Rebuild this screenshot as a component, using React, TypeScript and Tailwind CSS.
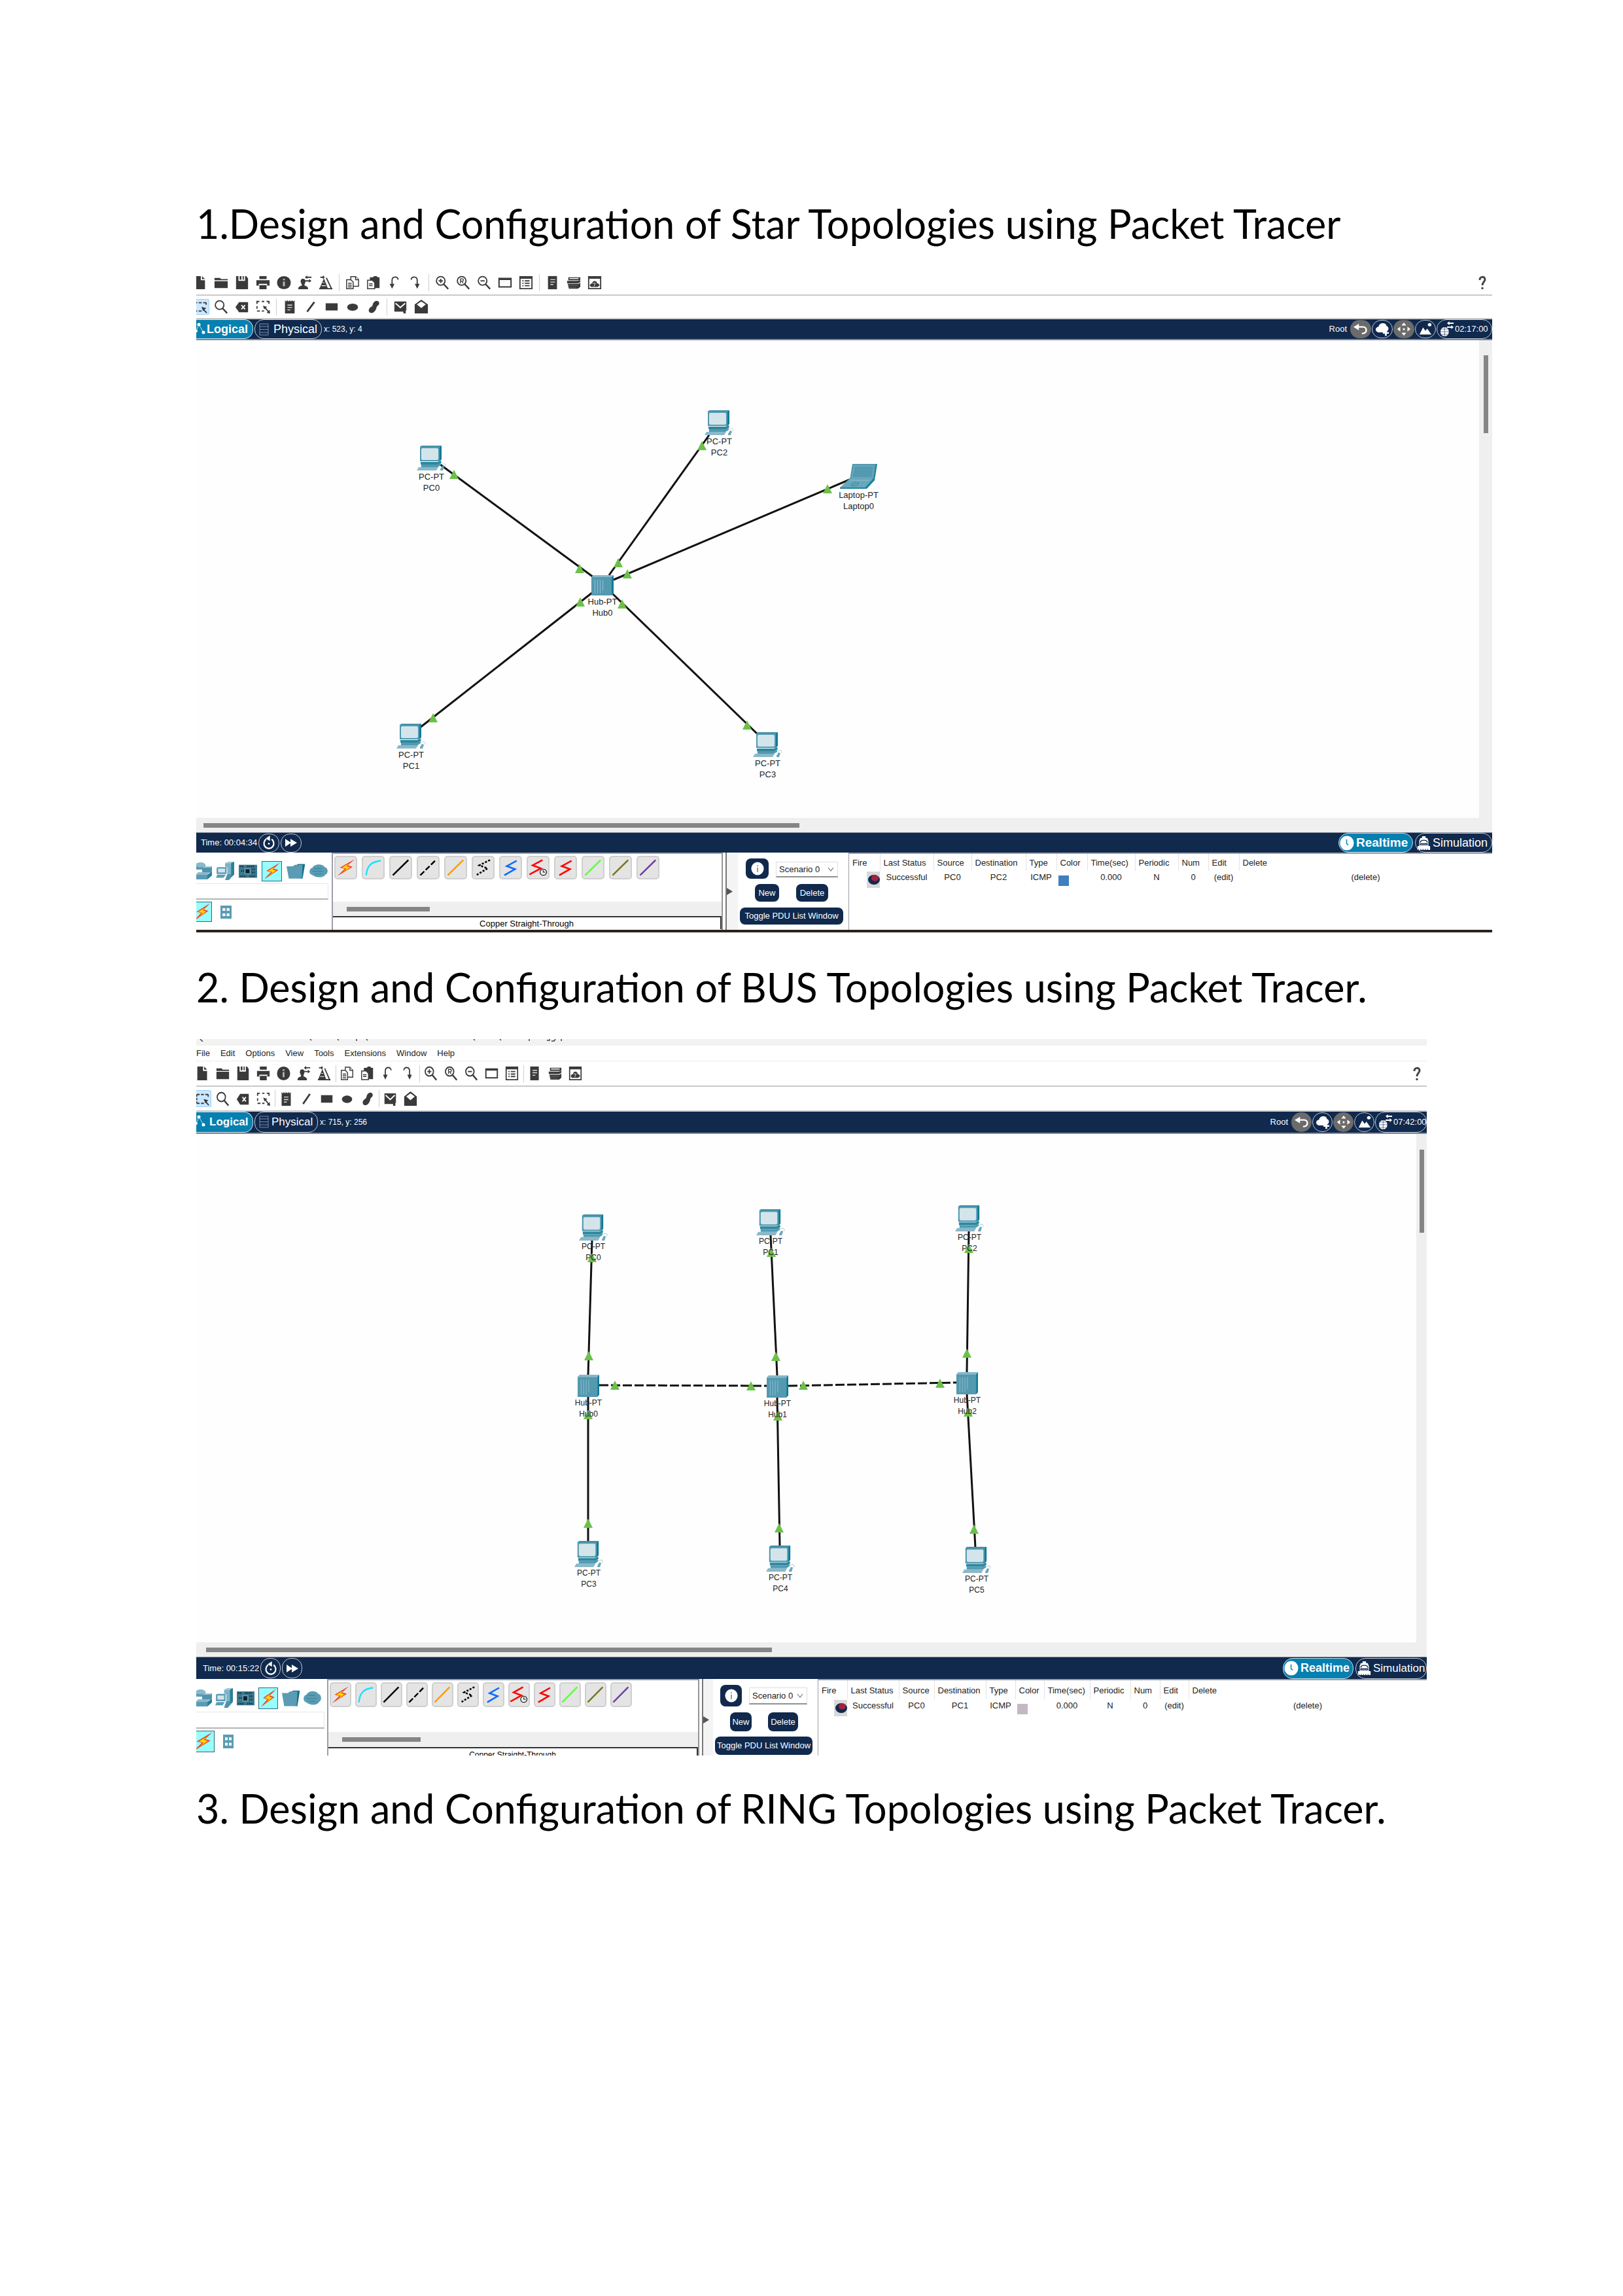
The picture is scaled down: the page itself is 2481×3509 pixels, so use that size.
import React from "react";

type Variant = {
  id: string;
  menu: boolean;
  iconBox: string;
  firstCell: string;
  cell: string;
  sep: string;
  row1: string;
  row2: string;
  selected: string;
  nav: string;
  pill: string;
  pillText: string;
  realtimeText: string;
  round: string;
  logical: string;
  physical: string;
  clock: string;
  canvas: string;
  gutter: string;
  vThumb: string;
  hThumb: string;
  timeBar: string;
  timePad: string;
  timeBtn: string;
  realtime: string;
  simulation: string;
  lower: string;
  devPad: string;
  devRow: string;
  devIcon: string;
  devSel: string;
  search: string;
  subSel: string;
  subGrid: string;
  cableRow: string;
  cableBtn: string;
  cableScroll: string;
  cableThumb: string;
  cableLabel: string;
  scen: string;
  info: string;
  select: string;
  newBtn: string;
  delBtn: string;
  scenRow1: string;
  scenRow2: string;
  toggle: string;
  thead: string;
  trow: string;
  cols: number[];
  nodeText: string;
  pcSize: [number, number];
  hubSize: [number, number];
};

const star: Variant = {
  id: "star",
  menu: false,
  iconBox: "h-[22px] w-[22px]",
  firstCell: "-ml-[10px]",
  cell: "w-8",
  sep: "w-[9px]",
  row1: "h-[38px]",
  row2: "h-9",
  selected: "h-6 w-[28px]",
  nav: "h-8",
  pill: "h-[30px]",
  pillText: "text-[18px]",
  realtimeText: "text-[19px]",
  round: "h-7 w-8",
  logical: "w-[87px] pl-[16px]",
  physical: "w-[103px] pl-[28px]",
  clock: "w-[85px]",
  canvas: "h-[730px]",
  gutter: "w-[20px]",
  vThumb: "mt-[23px] h-[119px]",
  hThumb: "ml-[11px]",
  timeBar: "h-[31px]",
  timePad: "pl-[7px]",
  timeBtn: "h-[29px] w-8",
  realtime: "w-[114px]",
  simulation: "w-[118px]",
  lower: "h-[118px] grid-cols-[207px_597px_24px_169px_1fr]",
  devPad: "pt-[12px]",
  devRow: "h-[32px] gap-[7px]",
  devIcon: "h-[28px] w-[28px]",
  devSel: "h-[31px] w-[31px]",
  search: "h-[25px] w-[202px] mt-[3px]",
  subSel: "h-[31px] w-[24px]",
  subGrid: "h-[20px] w-[17px]",
  cableRow: "pt-[3px] pl-[2px] h-[73px] gap-x-[7px]",
  cableBtn: "h-[36px] w-[35px]",
  cableScroll: "h-[22px]",
  cableThumb: "ml-[21px] w-[127px]",
  cableLabel: "text-[13px] h-[20px] leading-[20px]",
  scen: "pt-[9px]",
  info: "h-[31px] w-[35px]",
  select: "h-[24px] w-[95px]",
  newBtn: "h-[27px] w-[37px]",
  delBtn: "h-[27px] w-[49px]",
  scenRow1: "gap-[11px] pl-[12px]",
  scenRow2: "gap-[26px] pl-[26px] mt-[8px]",
  toggle: "h-[26px] w-[158px] ml-[3px] mt-[9px]",
  thead: "h-[26px]",
  trow: "h-[20px]",
  cols: [47, 82, 58, 83, 47, 47, 73, 66, 46, 47],
  nodeText: "text-[13px]",
  pcSize: [45, 38],
  hubSize: [34, 31],
};

const bus: Variant = {
  id: "bus",
  menu: true,
  iconBox: "h-[23px] w-[21px]",
  firstCell: "-ml-[6px]",
  cell: "w-[31px]",
  sep: "w-[4px]",
  row1: "h-[39px]",
  row2: "h-[38px]",
  selected: "h-[26px] w-[27px]",
  nav: "h-[34px]",
  pill: "h-[32px]",
  pillText: "text-[17px]",
  realtimeText: "text-[18px]",
  round: "h-[30px] w-[31px]",
  logical: "w-[87px] pl-[20px]",
  physical: "w-[97px] pl-[25px]",
  clock: "w-[79px]",
  canvas: "h-[777px]",
  gutter: "w-[16px]",
  vThumb: "mt-[24px] h-[127px]",
  hThumb: "ml-[15px]",
  timeBar: "h-[34px]",
  timePad: "pl-[10px]",
  timeBtn: "h-[31px] w-[31px]",
  realtime: "w-[108px]",
  simulation: "w-[109px]",
  lower: "h-[117px] grid-cols-[200px_568px_22px_160px_1fr]",
  devPad: "pt-[12px]",
  devRow: "h-[34px] gap-[6px]",
  devIcon: "h-[30px] w-[27px]",
  devSel: "h-[33px] w-[30px]",
  search: "h-[26px] w-[196px] mt-[4px]",
  subSel: "h-[33px] w-[28px]",
  subGrid: "h-[21px] w-[16px]",
  cableRow: "pt-[3px] pl-[2px] h-[79px] gap-x-[6px]",
  cableBtn: "h-[38px] w-[33px]",
  cableScroll: "h-[23px]",
  cableThumb: "ml-[21px] w-[120px]",
  cableLabel: "text-[12px] h-[20px] leading-[20px]",
  scen: "pt-[9px]",
  info: "h-[33px] w-[33px]",
  select: "h-[26px] w-[89px]",
  newBtn: "h-[29px] w-[33px]",
  delBtn: "h-[29px] w-[46px]",
  scenRow1: "gap-[11px] pl-[11px]",
  scenRow2: "gap-[25px] pl-[26px] mt-[9px]",
  toggle: "h-[28px] w-[149px] ml-[3px] mt-[8px]",
  thead: "h-[29px]",
  trow: "h-[20px]",
  cols: [44, 79, 54, 79, 45, 44, 70, 62, 45, 44],
  nodeText: "text-[12px]",
  pcSize: [44, 40],
  hubSize: [33, 34],
};

const INK = "#3a3a3c";

function Svg({ className, box = "0 0 24 24", children }: { className?: string; box?: string; children: React.ReactNode }) {
  return (
    <svg viewBox={box} preserveAspectRatio="none" className={className} fill="none" aria-hidden="true">
      {children}
    </svg>
  );
}

const magnifier = (inner: React.ReactNode) => (
  <g stroke={INK} fill="none">
    <circle cx="9.5" cy="9" r="7.2" strokeWidth="2" />
    <path d="M14.5 14.5 L22 22.5" strokeWidth="2.6" />
    {inner}
  </g>
);

const glyphs: Record<string, React.ReactNode> = {
  "New file": <path fill={INK} d="M3 1h10v7h7v15H3zM15 1l5 5h-5z" />,
  Open: <path fill={INK} d="M1 4h9l2 2h11v2H1zM1 9.500h22V21H1z" />,
  Save: <path fill={INK} fillRule="evenodd" d="M2 1h4v8h11V1h2l3 4v18H2zM8 1h3v6H8zM13 1h2v6h-2z" />,
  Print: (
    <g fill={INK}>
      <path d="M6 1h12v5H6zM1 8h22v9h-4v-3H5v3H1zM6 16h12v7H6z" />
    </g>
  ),
  "Network information": (
    <g>
      <ellipse cx="12" cy="12" rx="11.500" ry="11" fill={INK} />
      <path d="M10.500 10h3v8h-3zM10.500 5.500h3v2.500h-3z" fill="#b9b9b9" />
    </g>
  ),
  "User profile": (
    <g fill={INK}>
      <path d="M5 10a4 4.500 0 1 1 8 0c0 2-1 3-1.500 5v2c4 1 6 2 6 6H1c0-4 2-5 6-6v-2C6 13 5 12 5 10z" />
      <path d="M14 2h9v2h-9zM16 0v6l-4-3zM12 8h8v2h-8zM19 6l4 3-4 3z" />
    </g>
  ),
  "Activity wizard": (
    <g fill={INK}>
      <path d="M9 5l7 18H1z" />
      <path d="M13 4l9 19M3 3h6" stroke={INK} strokeWidth="2" />
      <path d="M1 22h22" stroke={INK} strokeWidth="2" />
      <path d="M7 12h3M5 17h7" stroke="#fff" strokeWidth="1.200" />
      <path d="M8 0l2 3-2 3-2-3z" />
    </g>
  ),
  Copy: (
    <g stroke={INK} strokeWidth="1.600" fill="#fff">
      <path d="M9 2h8l5 5v11H9z" />
      <path d="M17 2v5h5" />
      <path d="M2 7h7l4 4v11H2z" />
      <path d="M4.500 13h6M4.500 16h6M4.500 19h6" />
    </g>
  ),
  Paste: (
    <g>
      <path fill={INK} d="M6 3h5l2-2h4l2 2h3v18H6z" />
      <path d="M2 8h8l4 4v10H2z" fill="#fff" stroke={INK} strokeWidth="1.600" />
      <path d="M4.500 14h6M4.500 17h6" stroke={INK} strokeWidth="1.600" />
    </g>
  ),
  Undo: (
    <g>
      <path d="M18 7c0-6-10-6-10 1v8" stroke={INK} strokeWidth="2" />
      <path d="M4 14h8l-4 8z" fill={INK} />
    </g>
  ),
  Redo: (
    <g>
      <path d="M5 7c0-6 10-6 10 1v8" stroke={INK} strokeWidth="2" />
      <path d="M11 14h8l-4 8z" fill={INK} />
    </g>
  ),
  "Zoom in": magnifier(<path d="M9.500 5.500v7M6 9h7" strokeWidth="2" />),
  "Zoom reset": magnifier(<path d="M7.500 13V5.500h3a1.800 1.800 0 0 1 0 4h-3M10 9.500l2 3.500" strokeWidth="1.400" />),
  "Zoom out": magnifier(<path d="M6 9h7" strokeWidth="2" />),
  Workspace: <path d="M2 5h20v14H2zM2 6.500h20" stroke={INK} strokeWidth="2.200" />,
  "List view": (
    <g stroke={INK}>
      <path d="M2 2h20v20H2z" strokeWidth="2" />
      <path d="M2 4h20" strokeWidth="3" />
      <path d="M6 9h2M6 13h2M6 17h2M10 9h8M10 13h8M10 17h8" strokeWidth="2" />
    </g>
  ),
  "Custom devices": (
    <g>
      <path d="M4 1h15v22H4z" fill={INK} />
      <path d="M8 7h8M8 11h8M8 15h5" stroke="#ddd" strokeWidth="1.500" />
    </g>
  ),
  "Cluster devices": (
    <g fill={INK}>
      <path d="M3 3h20v5H3z" />
      <path d="M5 5h15" stroke="#fff" strokeWidth="1.500" />
      <path d="M1 9h17l5-1v3l-4 2H1z" />
      <path d="M2 14h18l3-2v7l-4 3H4z" />
      <path d="M4 17h14M5 20h12" stroke="#888" strokeDasharray="1.500 1.500" />
    </g>
  ),
  "Cloud view": (
    <g>
      <path d="M2 2h20v20H2z" stroke={INK} strokeWidth="2" />
      <path d="M2 4h20" stroke={INK} strokeWidth="3" />
      <path d="M4 17c0-3 3-4 4-4 0-5 8-5 8 0 3 0 4 2 4 4l-3 2H6z" fill={INK} />
      <path d="M9 13h4l-2 5" stroke="#bbb" strokeWidth="1.300" />
    </g>
  ),
  Select: (
    <g stroke={INK} strokeWidth="2">
      <path d="M2 5h20M2 19h13" strokeDasharray="5 2.500" />
      <path d="M22 5v5M2 5v14" strokeDasharray="3.500 2" />
      <path d="M23 22l-5-5" />
      <path d="M14 12l8 2-5 5z" fill={INK} stroke="none" />
    </g>
  ),
  Inspect: magnifier(null),
  Remove: (
    <g>
      <path d="M7 4h15v17H7L1 12.500z" fill={INK} />
      <path d="M11 9l6 7M17 9l-6 7" stroke="#fff" strokeWidth="2" />
    </g>
  ),
  Resize: (
    <g stroke={INK} strokeWidth="2">
      <path d="M2 7V3h4M10 3h4M18 3h4v4M2 11v4M2 19h5M10 19h4" />
      <path d="M15 13l7 8" />
      <path d="M12 10l7 2-5 4zM24 23l-6-1 5-5z" fill={INK} stroke="none" />
    </g>
  ),
  Note: (
    <g>
      <path d="M4 1l2 2 2-2 2 2 2-2 2 2 2-2 2 2 2-2v22H4z" fill={INK} />
      <path d="M8 9h8M8 13h8M8 17h5" stroke="#ddd" strokeWidth="1.500" />
    </g>
  ),
  "Draw line": <path d="M6 20L18 4" stroke={INK} strokeWidth="3" />,
  "Draw rectangle": <path d="M2 6h20v12H2z" fill={INK} />,
  "Draw ellipse": <ellipse cx="12" cy="12.500" rx="9" ry="6" fill={INK} />,
  "Draw freeform": <path d="M21 4c2 5-3 5-4 9-1 5-5 10-10 9-5-2-3-8 1-10 3-1 2-4 4-7 3-4 7-4 9-1z" fill={INK} />,
  "Simple PDU": (
    <g>
      <path d="M2 3h20v15h-1v5h-4v-3H2z" fill={INK} />
      <path d="M4 6l8 7 8-7" stroke="#fff" strokeWidth="2" />
    </g>
  ),
  "Complex PDU": (
    <g>
      <path d="M12 0l11 8v15H1V8z" fill={INK} />
      <path d="M4.500 8L12 3l7.500 5L12 14z" fill="#fff" />
    </g>
  ),
};

const fileTools = [
  ["New file", "Open", "Save", "Print", "Network information", "User profile", "Activity wizard"],
  ["Copy", "Paste", "Undo", "Redo"],
  ["Zoom in", "Zoom reset", "Zoom out", "Workspace", "List view"],
  ["Custom devices", "Cluster devices", "Cloud view"],
];
const drawTools = [
  ["Select", "Inspect", "Remove", "Resize"],
  ["Note", "Draw line", "Draw rectangle", "Draw ellipse", "Draw freeform"],
  ["Simple PDU", "Complex PDU"],
];

function Toolbar({ v, groups, className, help }: { v: Variant; groups: string[][]; className: string; help?: boolean }) {
  return (
    <div role="toolbar" className={`flex items-center overflow-hidden border-b-2 border-[#c9c9c9] bg-white ${className}`}>
      <div className={`flex items-center ${v.firstCell}`}>
        {groups.map((group, g) => (
          <React.Fragment key={g}>
            {g > 0 && (
              <div className={`flex justify-center ${v.sep}`}>
                <div className="h-[26px] w-px bg-[#cfcfcf]" />
              </div>
            )}
            {group.map((name) => (
              <button key={name} type="button" aria-label={name} className={`flex shrink-0 items-center justify-center ${v.cell}`}>
                <span
                  className={`flex items-center justify-center rounded-[2px] ${
                    name === "Select" ? `border border-[#99d1ff] bg-[#cce8ff] ${v.selected}` : ""
                  }`}
                >
                  <Svg className={v.iconBox}>{glyphs[name]}</Svg>
                </span>
              </button>
            ))}
          </React.Fragment>
        ))}
      </div>
      {help && (
        <button type="button" aria-label="Help" className="ml-auto mr-[9px]">
          <Svg className="h-[22px] w-[12px]" box="0 0 12 22">
            <path d="M2 7c0-6 8-6 8-1 0 4-4 4-4 9" stroke="#444" strokeWidth="3" />
            <path d="M4.500 18h3v3h-3z" fill="#444" />
          </Svg>
        </button>
      )}
    </div>
  );
}

function NavBar({ v, coords, clock }: { v: Variant; coords: string; clock: string }) {
  const ring = "flex shrink-0 items-center justify-center rounded-full";
  return (
    <div className={`flex items-center justify-between overflow-hidden border-b-2 border-[#7d8798] bg-[#10294d] text-white ${v.nav}`}>
      <div className="flex items-center gap-[2px]">
        <button
          type="button"
          className={`relative flex items-center rounded-r-[14px] border border-l-0 border-[#c8dce8] bg-[#0680b0] font-bold ${v.pill} ${v.pillText} ${v.logical}`}
        >
          <Svg className="absolute left-0 top-[3px] h-[20px] w-[16px]" box="0 0 16 20">
            <path d="M0 14L4 4l7 12" stroke="#bfe0ee" strokeWidth="1" />
            <circle cx="4" cy="4" r="2.500" fill="#fff" />
            <circle cx="11" cy="16" r="2.500" fill="#fff" />
            <circle cx="0" cy="14" r="2" fill="#fff" />
          </Svg>
          Logical
        </button>
        <button type="button" className={`relative flex items-center rounded-[14px] border border-[#c0c8d4] ${v.pill} ${v.pillText} ${v.physical}`}>
          <Svg className="absolute left-[6px] top-[5px] h-[19px] w-[15px]" box="0 0 15 19">
            <path d="M1 1h13v17H1zM1 5h13M1 9.500h13M1 14h13" stroke="#7a8ba8" strokeWidth="1" />
          </Svg>
          Physical
        </button>
        <span className="pl-px text-[12px]">{coords}</span>
      </div>
      <div className="flex items-center gap-px text-[13px]">
        <span className="mr-[4px]">Root</span>
        <button type="button" aria-label="Back" className={`${ring} bg-[#6b6b6b] ${v.round}`}>
          <Svg className="h-[20px] w-[22px]">
            <path d="M6 8h10c7 0 7 11 0 12h-2" stroke="#fff" strokeWidth="2.600" />
            <path d="M0 8l9-6v12z" fill="#fff" />
          </Svg>
        </button>
        <button type="button" aria-label="New cluster" className={`${ring} border border-[#c0c8d4] ${v.round}`}>
          <Svg className="h-[21px] w-[22px]">
            <path d="M2 15c-3-5 2-8 4-8 1-8 13-7 13-1 4 1 4 6 2 8l-3 3H5z" fill="#fff" />
            <path d="M18 13v10M13 18h10" stroke="#fff" strokeWidth="3" />
          </Svg>
        </button>
        <button type="button" aria-label="Move object" className={`${ring} bg-[#6b6b6b] ${v.round}`}>
          <Svg className="h-[22px] w-[22px]">
            <path d="M12 1l4 5H8zM12 23l4-5H8zM1 12l5-4v8zM23 12l-5-4v8zM10.500 10.500h3v3h-3z" fill="#fff" />
          </Svg>
        </button>
        <button type="button" aria-label="Set background" className={`${ring} border border-[#c0c8d4] ${v.round}`}>
          <Svg className="h-[20px] w-[22px]">
            <path d="M2 22l6-13 4 6 3-4 7 11z" fill="#fff" />
            <circle cx="19" cy="4" r="3" fill="#fff" />
          </Svg>
        </button>
        <button type="button" className={`flex items-center gap-px rounded-[15px] border border-[#c0c8d4] pl-[4px] ${v.pill} ${v.clock}`}>
          <Svg className="h-[24px] w-[22px] shrink-0">
            <circle cx="8" cy="16" r="7" fill="#fff" />
            <path d="M1 16h14M8 9v14M3 12h10M3 20h10" stroke="#10294d" strokeWidth="0.600" />
            <path d="M14 3h9M12 9h9" stroke="#fff" strokeWidth="1.800" />
            <path d="M16 0v6l-4-3zM19 6v6l4-3z" fill="#fff" />
          </Svg>
          {clock}
        </button>
      </div>
    </div>
  );
}

/* ---------- Topology canvas ---------- */

type Kind = "pc" | "hub" | "laptop";
type NodeDef = { kind: Kind; x: number; y: number; type: string; name: string };
type Link = { from: [number, number]; to: [number, number]; dashed?: boolean };

function DeviceArt({ kind }: { kind: Kind }) {
  if (kind === "pc")
    return (
      <>
        <path d="M5 2l3-2h30v21l-3 3H5z" fill="#0f7b96" />
        <path d="M5 2l3-2h30l-2 2z" fill="#4690a8" />
        <path d="M5 2h30v22H5z" fill="#5399b0" />
        <rect x="7" y="4" width="26" height="18" rx="2" fill="#d3e5ea" />
        <path d="M6 25h26l5-2 1 3-5 3H6z" fill="#2b88a0" />
        <path d="M7 29h25l5-2v3l-5 3H7z" fill="#5399b0" />
        <path d="M3 33h30l-3 5H0z" fill="#8ab9ca" />
        <path d="M36 36l3-5 3 1-2 6h-4z" fill="#6ca6ba" />
        <path d="M38 29c4-3 8 0 5 3" stroke="#b4d3dc" fill="none" />
      </>
    );
  if (kind === "hub")
    return (
      <>
        <path d="M0 3l3-3h31l-3 3z" fill="#86b7c8" />
        <path d="M31 3l3-3v28l-3 3z" fill="#0f7b96" />
        <path d="M0 3h31v28H0z" fill="#5399b0" />
        <path d="M5.500 7v21M9.500 7v21M13.500 7v21M17.500 7v17" stroke="#8fbfce" strokeWidth="1" />
      </>
    );
  return (
    <>
      <path d="M19 0h38l-4 25-12 13-3-3 13-12 3-22z" fill="#1f819b" />
      <path d="M19 0h36l-4 24H15z" fill="#5399b0" />
      <path d="M22 3h30l-3 18H18z" fill="#5399b0" stroke="#7fb2c3" />
      <path d="M15 22h36L39 36H0z" fill="#68a7bb" />
      <path d="M0 36h39l12-14v2L40 38H0z" fill="#1f819b" />
      <path d="M20 29h9l-3 4h-9z" stroke="#2b88a0" fill="none" />
      <path d="M15 25h30" stroke="#8fbfce" />
    </>
  );
}

function Topology({ v, label, nodes, links, lights }: { v: Variant; label: string; nodes: NodeDef[]; links: Link[]; lights: [number, number][] }) {
  const sizes: Record<Kind, [number, number]> = { pc: v.pcSize, hub: v.hubSize, laptop: [57, 38] };
  return (
    <div className={`relative overflow-hidden bg-[#fefefe] ${v.canvas}`} role="group" aria-label={label}>
      <svg className="absolute inset-0 h-full w-full" aria-hidden="true">
        {links.map((l, i) => (
          <line
            key={i}
            x1={l.from[0]}
            y1={l.from[1]}
            x2={l.to[0]}
            y2={l.to[1]}
            stroke="#111"
            strokeWidth="3"
            strokeDasharray={l.dashed ? "14 4" : undefined}
          />
        ))}
        {lights.map(([x, y], i) => (
          <path key={i} d={`M${x} ${y - 7}l7 14h-14z`} fill="#6cc04a" />
        ))}
      </svg>
      {nodes.map((n) => {
        const [w, h] = sizes[n.kind];
        return (
          <div key={n.name} className="absolute flex w-[80px] flex-col items-center" style={{ left: n.x + w / 2 - 40, top: n.y }}>
            <svg width={w} height={h} viewBox={n.kind === "pc" ? "0 0 45 38" : n.kind === "hub" ? "0 0 34 31" : "0 0 57 38"} preserveAspectRatio="none" aria-hidden="true">
              <DeviceArt kind={n.kind} />
            </svg>
            <div className={`mt-px whitespace-nowrap text-center leading-[17px] text-[#222] ${v.nodeText}`}>
              {n.type}
              <br />
              {n.name}
            </div>
          </div>
        );
      })}
    </div>
  );
}

/* ---------- Device and cable palettes ---------- */

const Bolt = () => (
  <>
    <path d="M22.500 1L4.500 12l6 1.500L1.500 23 20 11l-6-2z" fill="#f0301c" />
    <path d="M18 5L6 12l6 1.500L6 19.500 18 11.500 12.500 9.500z" fill="#ff8a00" />
    <path d="M14 8l-6 3.800 5 1.200-2 2.500 5-4-4-1z" fill="#ffe000" stroke="#ffd000" strokeWidth="0.600" />
  </>
);

const T = "#5a9cb4";
const D = "#2b7f9a";

const devices: { name: string; art: React.ReactNode }[] = [
  {
    name: "End devices",
    art: (
      <>
        <path d="M1 8l2-1h11v9H1z" fill={T} />
        <path d="M3 9h9v5H3z" fill="#d3e5ea" />
        <path d="M12 2l4-2h8l-4 2z" fill="#9cc8d6" />
        <path d="M12 2h8v14h-5V8l-3-2z" fill="#7db3c6" />
        <path d="M20 2l4-2v17l-7 7h-5l3-8h5z" fill="#4f94ac" />
        <path d="M20 2l4-2v16l-4 3z" fill={D} />
        <path d="M2 17h11l-3 4H0z" fill={T} />
      </>
    ),
  },
  {
    name: "Components",
    art: (
      <>
        <path d="M0 4h24v17H0z" fill="#3a788f" />
        <path d="M2 6h5M11 6h10M2 19h8M14 19h8M3 12h4M17 10h5M17 14h5" stroke="#163646" strokeWidth="2" strokeDasharray="1.500 1" />
        <path d="M9 10h5v5H9z" fill="#101e28" />
        <path d="M8 9h7v7H8z" stroke="#8fc3d5" strokeWidth="0.600" />
      </>
    ),
  },
  { name: "Connections", art: <Bolt /> },
  {
    name: "Miscellaneous",
    art: (
      <>
        <path d="M12 5l3-2h9v2l-3 17h-3z" fill="#12738c" />
        <path d="M0 6h8l3-2h10l-1 18H3z" fill={T} />
      </>
    ),
  },
  {
    name: "Multiuser connection",
    art: (
      <>
        <path d="M3 17c-4-1-4-8 1-9 2-5 13-6 16-1 5 1 5 8 1 10-3 5-13 4-18 0z" fill={T} />
        <path d="M6 9h10M4 12.500h14M7 16h9" stroke="#3f88a2" strokeWidth="1.200" />
      </>
    ),
  },
];

const cables: { name: string; art: React.ReactNode }[] = [
  { name: "Automatic", art: <Bolt /> },
  { name: "Console", art: <path d="M3 22C4 10 9 4 21 3" stroke="#19e3fb" strokeWidth="2" /> },
  { name: "Copper straight-through", art: <path d="M2 22L21 2" stroke="#000" strokeWidth="2" /> },
  { name: "Copper cross-over", art: <path d="M2 22L21 2" stroke="#000" strokeWidth="2" strokeDasharray="7 2.500" /> },
  { name: "Fiber", art: <path d="M2 22L21 2" stroke="#ff9d00" strokeWidth="2" /> },
  { name: "Phone", art: <path d="M20 2L7 9l10 4L3 22" stroke="#000" strokeWidth="2.200" strokeDasharray="2.500 1.800" /> },
  { name: "Coaxial", art: <path d="M19 3L7 10l10 4L4 22" stroke="#0a6cff" strokeWidth="2.200" /> },
  {
    name: "Serial DCE",
    art: (
      <>
        <path d="M17 2L5 9l10 4L1 21" stroke="#ff0000" strokeWidth="2.200" />
        <circle cx="18" cy="18" r="4" fill="#eee" stroke="#222" />
        <path d="M18 15.500V18h2.500" stroke="#222" />
      </>
    ),
  },
  { name: "Serial DTE", art: <path d="M19 3L7 10l10 4L4 22" stroke="#ff0000" strokeWidth="2.200" /> },
  { name: "Octal", art: <path d="M2 22L21 2" stroke="#5dff3a" strokeWidth="2" /> },
  { name: "IoT custom cable", art: <path d="M2 22L21 2" stroke="#7a7420" strokeWidth="2" /> },
  { name: "USB", art: <path d="M2 22L21 2" stroke="#6b3fa0" strokeWidth="2" /> },
];

function LowerPanel({ v, source, dest, color }: { v: Variant; source: string; dest: string; color: string }) {
  const dark = "flex items-center justify-center rounded-[8px] bg-[#10294d] text-[13px] text-white whitespace-nowrap";
  const heads = ["Fire", "Last Status", "Source", "Destination", "Type", "Color", "Time(sec)", "Periodic", "Num", "Edit", "Delete"];
  const cells = ["Successful", source, dest, "ICMP", null, "0.000", "N", "0", "(edit)", "(delete)"];
  return (
    <div className={`grid overflow-hidden ${v.lower}`}>
      <div className={`bg-white ${v.devPad}`}>
        <div className={`flex items-center ${v.devRow}`}>
          <button type="button" aria-label="Network devices" className="-mr-px">
            <svg viewBox="0 0 24 28" preserveAspectRatio="none" className="h-[28px] w-[24px]" aria-hidden="true">
              <path d="M0 3c5-3 13-2 14 2v7H0z" fill={T} />
              <path d="M0 3c5-3 13-2 14 2-3 4-10 4-14 2z" fill="#8ab9ca" />
              <path d="M9 9l3-2h12v8l-3 2H9z" fill="#4f94ac" />
              <path d="M9 9l3-2h12l-2 2z" fill="#9cc8d6" />
              <path d="M0 19l3-3h18l-4 4H0z" fill="#8ab9ca" />
              <path d="M0 20h17v7H0z" fill={T} />
              <path d="M17 20l7-5v6l-7 6z" fill={D} />
            </svg>
          </button>
          {devices.map((d) => (
            <button
              key={d.name}
              type="button"
              aria-label={d.name}
              className={`flex items-center justify-center ${d.name === "Connections" ? `border border-[#2c6a78] bg-[#97fdff] ${v.devSel}` : ""}`}
            >
              <Svg className={v.devIcon}>{d.art}</Svg>
            </button>
          ))}
        </div>
        <input aria-label="Search devices" className={`block border border-l-0 border-b-2 border-[#e6e6e6] border-b-[#b5b5b5] bg-white ${v.search}`} />
        <div className="mt-[3px] flex items-center gap-[13px]">
          <button type="button" aria-label="Cables" className={`overflow-hidden border border-l-0 border-[#2c6a78] bg-[#97fdff] ${v.subSel}`}>
            <svg viewBox="4 0 20 24" preserveAspectRatio="none" className="h-full w-full" aria-hidden="true">
              <Bolt />
            </svg>
          </button>
          <button type="button" aria-label="Structured cabling">
            <Svg className={v.subGrid} box="0 0 16 20">
              <path d="M0 0h16v20H0z" fill={T} />
              <path d="M3 4h4v4H3zM9 4h4v4H9zM3 12h4v4H3zM9 12h4v4H9z" fill="#fff" />
            </Svg>
          </button>
        </div>
      </div>

      <div className="flex flex-col border-l-2 border-r border-t-2 border-[#9a9fa8] bg-white">
        <div className={`flex items-start ${v.cableRow}`}>
          {cables.map((c) => (
            <button key={c.name} type="button" aria-label={c.name} className={`flex shrink-0 items-center justify-center rounded-[5px] border-2 border-[#cfcfcf] bg-[#e4e4e4] ${v.cableBtn}`}>
              <Svg className="h-[28px] w-[30px]">{c.art}</Svg>
            </button>
          ))}
        </div>
        <div className={`flex items-center bg-[#efefef] ${v.cableScroll}`}>
          <div className={`h-[7px] bg-[#858585] ${v.cableThumb}`} />
        </div>
        <div className={`shrink-0 border-r-2 border-t-2 border-[#333] text-center text-black ${v.cableLabel}`}>Copper Straight-Through</div>
      </div>

      <div className="flex items-center border-l border-[#888] bg-white pl-[4px]">
        <div className="flex h-full w-full items-center border-l-2 border-[#777] bg-[#f4f4f4]">
          <Svg className="h-[11px] w-[9px]" box="0 0 9 11">
            <path d="M0 0l9 5.500L0 11z" fill="#555" />
          </Svg>
        </div>
      </div>

      <div className={`bg-white ${v.scen}`}>
        <div className={`flex items-center ${v.scenRow1}`}>
          <button type="button" aria-label="Scenario information" className={`${dark} ${v.info}`}>
            <Svg className="h-[21px] w-[20px]">
              <circle cx="12" cy="12" r="11.500" fill="#fff" />
              <path d="M11 10h2v8h-2zM11 6h2v2h-2z" fill="#7a8798" />
            </Svg>
          </button>
          <div className={`relative ${v.select}`}>
            <select aria-label="Scenario" className="h-full w-full appearance-none border border-b-2 border-[#dedede] border-b-[#909090] bg-white pl-[4px] text-[13px] text-[#222]">
              <option>Scenario 0</option>
            </select>
            <Svg className="pointer-events-none absolute right-[6px] top-[9px] h-[7px] w-[10px]" box="0 0 10 7">
              <path d="M1 1l4 5 4-5" stroke="#777" strokeWidth="1.200" />
            </Svg>
          </div>
        </div>
        <div className={`flex ${v.scenRow2}`}>
          <button type="button" className={`${dark} ${v.newBtn}`}>New</button>
          <button type="button" className={`${dark} ${v.delBtn}`}>Delete</button>
        </div>
        <button type="button" className={`${dark} ${v.toggle}`}>Toggle PDU List Window</button>
      </div>

      <div className="overflow-hidden border-l border-t-2 border-[#9a9fa8] bg-white">
        <table className="w-full table-fixed border-collapse text-[13px] text-[#222]">
          <colgroup>
            {v.cols.map((w, i) => (
              <col key={i} style={{ width: w }} />
            ))}
            <col />
          </colgroup>
          <thead>
            <tr className={v.thead}>
              {heads.map((h, i) => (
                <th key={h} scope="col" className={`whitespace-nowrap p-0 pl-[5px] pt-[2px] text-left font-normal ${i < 10 ? "border-r border-[#e3e3e3]" : ""}`}>
                  {h}
                </th>
              ))}
            </tr>
          </thead>
          <tbody>
            <tr className={v.trow}>
              <td className="p-0">
                <button type="button" aria-label="Fire" className="relative float-right h-[18px] w-[20px]">
                  <span className="absolute left-0 top-0 flex h-[25px] w-[20px] items-center justify-end bg-[#d8d8d8]">
                    <Svg className="h-[15px] w-[18px]">
                      <ellipse cx="12" cy="12" rx="12" ry="12" fill="#10294d" />
                      <circle cx="14" cy="8" r="7.500" fill="#a5213c" />
                    </Svg>
                  </span>
                </button>
              </td>
              {cells.map((c, i) => (
                <td key={i} className="p-0 text-center align-middle leading-[18px]">
                  {c === null ? (
                    <div className="relative h-[16px]">
                      <div className="absolute left-[3px] top-[5px] h-[16px] w-[16px]" style={{ backgroundColor: color }} />
                    </div>
                  ) : (
                    c
                  )}
                </td>
              ))}
            </tr>
          </tbody>
        </table>
      </div>
    </div>
  );
}

function PacketTracer(props: {
  v: Variant;
  label: string;
  coords: string;
  clock: string;
  time: string;
  source: string;
  dest: string;
  color: string;
  nodes: NodeDef[];
  links: Link[];
  lights: [number, number][];
}) {
  const { v } = props;
  return (
    <section aria-label={props.label} className="overflow-hidden font-['Liberation_Sans',sans-serif]">
      {v.menu && (
        <>
          <div className="h-[10px] overflow-hidden bg-[#f2f2f2]">
            <svg width="600" height="4" aria-hidden="true">
              <path d="M6 0l4 4M174 0l2 2M216 0l2 2M260 0l2 2M424 0l2 2M464 0l2 2M245 0v3M509 0v3M558 0v3M536 2h4v-2M543 3h4l2-3" stroke="#444" strokeWidth="1.500" fill="none" />
            </svg>
          </div>
          <nav className="flex h-[24px] items-center gap-[16px] border-b border-[#ececec] bg-white text-[13px] leading-[16px] text-[#222]">
            {["File", "Edit", "Options", "View", "Tools", "Extensions", "Window", "Help"].map((m) => (
              <button key={m} type="button">
                {m}
              </button>
            ))}
          </nav>
        </>
      )}
      <Toolbar v={v} groups={fileTools} className={v.row1} help />
      <Toolbar v={v} groups={drawTools} className={v.row2} />
      <NavBar v={v} coords={props.coords} clock={props.clock} />
      <div className="flex">
        <div className="min-w-0 flex-1">
          <Topology v={v} label={props.label} nodes={props.nodes} links={props.links} lights={props.lights} />
        </div>
        <div className={`flex justify-center bg-[#efefef] ${v.gutter}`}>
          <div className={`w-[7px] bg-[#858585] ${v.vThumb}`} />
        </div>
      </div>
      <div className="flex h-[22px] items-center bg-[#efefef]">
        <div className={`h-[7px] w-[46%] bg-[#858585] ${v.hThumb}`} />
      </div>
      <div className={`flex items-center justify-between overflow-hidden border-t border-[#7d8798] bg-[#10294d] text-white ${v.timeBar} ${v.timePad}`}>
        <div className="flex items-center gap-[2px] text-[13px]">
          <span>Time: {props.time}</span>
          <button type="button" aria-label="Power cycle devices" className={`flex items-center justify-center rounded-[14px] border border-[#c0c8d4] ${v.timeBtn}`}>
            <Svg className="h-[22px] w-[20px]">
              <path d="M7 6a9 8.500 0 1 0 10 0" stroke="#fff" strokeWidth="2.600" />
              <path d="M6 5l8-5v9z" fill="#fff" />
              <circle cx="12" cy="13.500" r="1.600" fill="#fff" />
            </Svg>
          </button>
          <button type="button" aria-label="Fast forward time" className={`flex items-center justify-center rounded-[14px] border border-[#c0c8d4] ${v.timeBtn}`}>
            <Svg className="h-[12px] w-[18px]" box="0 0 18 12">
              <path d="M0 0l9 6-9 6zM8 0l10 6-10 6z" fill="#fff" />
            </Svg>
          </button>
        </div>
        <div className={`flex items-center gap-[3px] ${v.pillText}`}>
          <button type="button" className={`flex items-center gap-[3px] rounded-[15px] border border-[#c8dce8] bg-[#0680b0] pl-px font-bold ${v.pill} ${v.realtime} ${v.realtimeText}`}>
            <Svg className="h-[23px] w-[22px] shrink-0">
              <circle cx="12" cy="12" r="11.500" fill="#fff" />
              <path d="M11.500 6v7l3 2" stroke="#0680b0" strokeWidth="1.600" />
            </Svg>
            Realtime
          </button>
          <button type="button" className={`flex items-center gap-[3px] rounded-[15px] border border-[#c0c8d4] pl-[2px] ${v.pill} ${v.simulation}`}>
            <Svg className="h-[21px] w-[21px] shrink-0">
              <path d="M9 0h6v3h3l2 5v9h3v7H1v-7h3V8l2-5h3z" fill="#fff" />
              <path d="M6 11c0-3 3-4 6-4s6 1 6 4M6 13h12v2H6z" stroke="#10294d" strokeWidth="1.600" />
              <path d="M2 23h20" stroke="#10294d" strokeWidth="1.600" strokeDasharray="1.500 2.500" />
            </Svg>
            Simulation
          </button>
        </div>
      </div>
      <LowerPanel v={v} source={props.source} dest={props.dest} color={props.color} />
    </section>
  );
}

/* ---------- Diagram data ---------- */

const starNodes: NodeDef[] = [
  { kind: "pc", x: 337, y: 161, type: "PC-PT", name: "PC0" },
  { kind: "pc", x: 777, y: 107, type: "PC-PT", name: "PC2" },
  { kind: "laptop", x: 984, y: 189, type: "Laptop-PT", name: "Laptop0" },
  { kind: "hub", x: 604, y: 359, type: "Hub-PT", name: "Hub0" },
  { kind: "pc", x: 306, y: 586, type: "PC-PT", name: "PC1" },
  { kind: "pc", x: 851, y: 599, type: "PC-PT", name: "PC3" },
];
const starLinks: Link[] = [
  { from: [373, 190], to: [607, 362] },
  { from: [784, 145], to: [631, 359] },
  { from: [1001, 212], to: [638, 366] },
  { from: [342, 592], to: [605, 386] },
  { from: [858, 602], to: [637, 388] },
];
const starLights: [number, number][] = [
  [394, 205], [586, 349], [773, 161], [645, 340], [965, 227],
  [659, 357], [587, 400], [651, 403], [362, 577], [842, 588],
];

const busNodes: NodeDef[] = [
  { kind: "pc", x: 585, y: 123, type: "PC-PT", name: "PC0" },
  { kind: "pc", x: 856, y: 115, type: "PC-PT", name: "PC1" },
  { kind: "pc", x: 1160, y: 109, type: "PC-PT", name: "PC2" },
  { kind: "hub", x: 583, y: 368, type: "Hub-PT", name: "Hub0" },
  { kind: "hub", x: 872, y: 369, type: "Hub-PT", name: "Hub1" },
  { kind: "hub", x: 1162, y: 364, type: "Hub-PT", name: "Hub2" },
  { kind: "pc", x: 578, y: 622, type: "PC-PT", name: "PC3" },
  { kind: "pc", x: 871, y: 629, type: "PC-PT", name: "PC4" },
  { kind: "pc", x: 1171, y: 631, type: "PC-PT", name: "PC5" },
];
const busLinks: Link[] = [
  { from: [605, 163], to: [599, 369] },
  { from: [878, 155], to: [888, 369] },
  { from: [1181, 148], to: [1178, 365] },
  { from: [599, 401], to: [599, 623] },
  { from: [888, 402], to: [892, 630] },
  { from: [1178, 397], to: [1191, 632] },
  { from: [616, 384], to: [872, 385], dashed: true },
  { from: [905, 385], to: [1162, 380], dashed: true },
];
const busLights: [number, number][] = [
  [605, 189], [600, 339], [879, 181], [886, 340], [1181, 175], [1178, 335],
  [640, 384], [848, 385], [928, 384], [1137, 381], [599, 429], [889, 431],
  [1180, 425], [599, 595], [891, 602], [1189, 604],
];

function Heading({ children }: { children: React.ReactNode }) {
  return <h2 className="h-20 whitespace-nowrap font-['Lato',sans-serif] text-[61px] leading-[80px] text-black">{children}</h2>;
}

export default function App() {
  return (
    <main className="min-h-[3509px] bg-white pb-20 pl-[300px] pr-[200px] pt-[302px]">
      <Heading>1.Design and Configuration of Star Topologies using Packet Tracer</Heading>
      <div className="mt-[32px] border-b-4 border-[#2e211c]">
        <PacketTracer
          v={star}
          label="Star topology"
          coords="x: 523, y: 4"
          clock="02:17:00"
          time="00:04:34"
          source="PC0"
          dest="PC2"
          color="#3f7fbf"
          nodes={starNodes}
          links={starLinks}
          lights={starLights}
        />
      </div>
      <div className="mt-[44px]">
        <Heading>2. Design and Configuration of BUS Topologies using Packet Tracer.</Heading>
      </div>
      <div className="mr-[100px] mt-[39px]">
        <PacketTracer
          v={bus}
          label="Bus topology"
          coords="x: 715, y: 256"
          clock="07:42:00"
          time="00:15:22"
          source="PC0"
          dest="PC1"
          color="#c4b8c4"
          nodes={busNodes}
          links={busLinks}
          lights={busLights}
        />
      </div>
      <div className="mt-[41px]">
        <Heading>3. Design and Configuration of RING Topologies using Packet Tracer.</Heading>
      </div>
    </main>
  );
}
